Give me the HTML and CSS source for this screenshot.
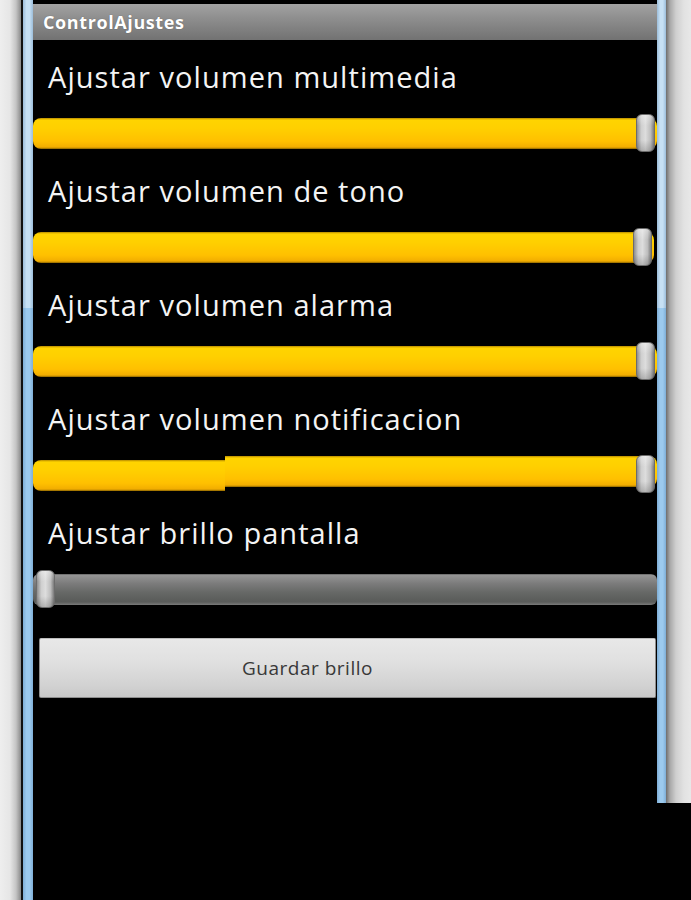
FILE: index.html
```html
<!DOCTYPE html>
<html lang="es">
<head>
<meta charset="utf-8">
<title>ControlAjustes</title>
<link rel="stylesheet" href="styles.css">
</head>
<body>
<div class="device">
  <div class="chrome-left"></div>
  <div class="edge edge-left"></div>
  <main class="screen">
    <header class="titlebar">ControlAjustes</header>
    <section class="list">
      <div class="row">
        <div class="label">Ajustar volumen multimedia</div>
        <div class="track track-on"><span class="thumb thumb-end"></span></div>
      </div>
      <div class="row">
        <div class="label">Ajustar volumen de tono</div>
        <div class="track track-on track-short"><span class="thumb thumb-end"></span></div>
      </div>
      <div class="row">
        <div class="label">Ajustar volumen alarma</div>
        <div class="track track-on"><span class="thumb thumb-end"></span></div>
      </div>
      <div class="row">
        <div class="label">Ajustar volumen notificacion</div>
        <div class="track track-torn">
          <span class="seg seg-a"></span>
          <span class="seg seg-b"></span>
          <span class="thumb thumb-end thumb-torn"></span>
        </div>
      </div>
      <div class="row">
        <div class="label">Ajustar brillo pantalla</div>
        <div class="track track-off"><span class="thumb thumb-start"></span></div>
      </div>
      <button class="save" type="button">Guardar brillo</button>
    </section>
  </main>
  <div class="right-col">
    <div class="edge edge-right"></div>
    <div class="chrome-right"></div>
  </div>
</div>
</body>
</html>
```
FILE: styles.css
```css
html, body {
  margin: 0;
  padding: 0;
  background: #000;
}
body {
  width: 691px;
  height: 900px;
  overflow: hidden;
  font-family: "Open Sans", "DejaVu Sans", sans-serif;
}
.device {
  display: flex;
  height: 900px;
}
.chrome-left {
  width: 21px;
  background: linear-gradient(to right, #eeeeee 0, #e6e6e6 10px, #c4c4c4 16px, #8a8a8a 21px);
}
.edge {
  width: 10px;
  background:
    linear-gradient(to right, rgba(60,110,160,.3), rgba(255,255,255,0) 35%, rgba(255,255,255,0) 65%, rgba(60,110,160,.3)),
    linear-gradient(to bottom, #c6e0f4 0, #c6e0f4 308px, #9ccaee 308px, #9ccaee 100%);
}
.edge-left {
  border-left: 2px solid #111;
}
.screen {
  flex: 1;
  min-width: 0;
  display: flex;
  flex-direction: column;
  padding-top: 4px;
  background: #000;
}
.titlebar {
  height: 36px;
  box-sizing: border-box;
  padding-left: 10px;
  display: flex;
  align-items: center;
  background: linear-gradient(to bottom, #a2a2a2 0, #8e8e8e 40%, #727272 100%);
  color: #fff;
  font-weight: 700;
  font-size: 18px;
  letter-spacing: 0.6px;
  text-shadow: 0 0 1px rgba(0,0,0,.4);
}
.list {
  display: flex;
  flex-direction: column;
  padding-top: 17px;
}
.row {
  display: flex;
  flex-direction: column;
  height: 114px;
}
.label {
  height: 40px;
  line-height: 40px;
  padding-left: 15px;
  color: #f4f4f4;
  font-size: 29px;
  letter-spacing: 1.05px;
  white-space: nowrap;
}
.track {
  position: relative;
  margin-top: 21px;
  height: 31px;
  box-sizing: border-box;
  border-radius: 8px;
}
.track-on, .seg {
  background: linear-gradient(to bottom, #b78a00 0, #ffd400 2px, #ffcf00 35%, #ffc000 75%, #f2ad00 94%, #8a6400 100%);
}
.track-short {
  margin-right: 3px;
}
.track-torn {
  display: flex;
  align-items: flex-start;
  background: none;
}
.seg {
  height: 31px;
}
.seg-a {
  width: 192px;
  border-radius: 8px 0 0 8px;
}
.seg-b {
  flex: 1;
  margin-top: -4px;
  border-radius: 0 8px 8px 0;
}
.track-off {
  border-radius: 6px;
  background: linear-gradient(to bottom, #5b5b5b 0, #959595 4%, #7c7c7c 30%, #666866 60%, #595b59 90%, #7a7a7a 100%);
}
.thumb {
  position: absolute;
  top: -4px;
  width: 19px;
  height: 38px;
  box-sizing: border-box;
  border-radius: 6px;
  border: 1px solid #6c6c6c;
  background:
    linear-gradient(to bottom, rgba(255,255,255,.35) 0, rgba(255,255,255,0) 30%, rgba(0,0,0,0) 70%, rgba(0,0,0,.18) 100%),
    linear-gradient(to right, #8e8e8e 0, #cfcfcf 25%, #dddddd 50%, #bdbdbd 80%, #7a7a7a 100%);
}
.thumb-end {
  right: 2px;
}
.thumb-torn {
  top: -5px;
}
.thumb-start {
  left: 3px;
}
.save {
  margin: 11px 1px 0 6px;
  height: 60px;
  box-sizing: border-box;
  padding: 0 80px 0 0;
  border: 1px solid #8d8d8d;
  border-top-color: #bdbdbd;
  border-radius: 2px;
  background: linear-gradient(to bottom, #e8e8e8 0, #e0e0e0 40%, #d2d2d2 80%, #c8c8c8 100%);
  color: #383838;
  font-family: "Open Sans", "DejaVu Sans", sans-serif;
  font-size: 19px;
  letter-spacing: 0.5px;
  text-align: center;
}
.right-col {
  display: flex;
  height: 803px;
  width: 34px;
}
.edge-right {
  width: 9px;
}
.chrome-right {
  flex: 1;
  background: linear-gradient(to right, #6e6e6e 0, #a8a8a8 4px, #cfcfcf 10px, #e2e2e2 18px, #e8e8e8 25px);
}
```
